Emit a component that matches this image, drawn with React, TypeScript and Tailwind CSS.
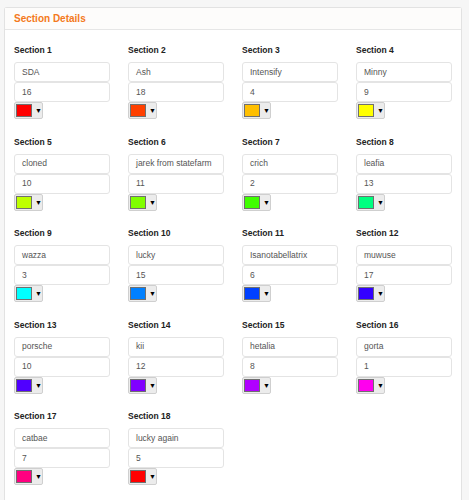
import React from "react";

const sections: { name: string; num: string; color: string }[] = [
  { name: "SDA", num: "16", color: "#ff0000" },
  { name: "Ash", num: "18", color: "#ff4000" },
  { name: "Intensify", num: "4", color: "#ffbf00" },
  { name: "Minny", num: "9", color: "#ffff00" },
  { name: "cloned", num: "10", color: "#bfff00" },
  { name: "jarek from statefarm", num: "11", color: "#80ff00" },
  { name: "crich", num: "2", color: "#40ff00" },
  { name: "leafia", num: "13", color: "#00ff80" },
  { name: "wazza", num: "3", color: "#00ffff" },
  { name: "lucky", num: "15", color: "#0080ff" },
  { name: "Isanotabellatrix", num: "6", color: "#0040ff" },
  { name: "muwuse", num: "17", color: "#3300ff" },
  { name: "porsche", num: "10", color: "#5000ff" },
  { name: "kii", num: "12", color: "#8000ff" },
  { name: "hetalia", num: "8", color: "#b000ff" },
  { name: "gorta", num: "1", color: "#ff00ee" },
  { name: "catbae", num: "7", color: "#ff0080" },
  { name: "lucky again", num: "5", color: "#ff0000" },
];

function Picker({ color }: { color: string }) {
  return (
    <div className="flex h-[17px] w-[29px] items-center rounded-[2px] border border-[#cfcfcf] bg-[#ececec] pl-[1px]">
      <div
        className="h-[13px] w-[16px] border border-[#6f6f6f]"
        style={{ backgroundColor: color }}
      />
      <span className="ml-[3px] text-[7px] leading-none text-black">▼</span>
    </div>
  );
}

export default function App() {
  return (
    <div
      className="min-h-screen bg-[#f6f6f6] pl-[4px] pr-[7px] pt-[7px]"
      style={{ fontFamily: '"Liberation Sans", Arial, sans-serif' }}
    >
      <div className="min-h-[493px] rounded-t-[3px] border border-b-0 border-[#e2e2e2] bg-white">
        <div className="flex h-[22px] items-center border-b border-[#e6e6e6] bg-[#fdfcfb] px-[9px] text-[10px] font-bold text-[#f47920]">
          Section Details
        </div>
        <div className="grid grid-cols-[repeat(4,96px)] gap-x-[18px] gap-y-[14.5px] px-[9px] pt-[12px]">
          {sections.map((s, i) => (
            <div key={i} className="flex flex-col">
              <div className="mb-[4px] h-[16px] text-[8.5px] font-bold leading-[16px] text-[#222]">
                Section {i + 1}
              </div>
              <div className="flex h-[20px] items-center rounded-[3px] border border-[#e4e4e4] px-[7px] text-[8.5px] text-[#555]">
                {s.name}
              </div>
              <div className="flex h-[20px] items-center rounded-[3px] border border-[#e4e4e4] px-[7px] text-[8.5px] text-[#555]">
                {s.num}
              </div>
              <Picker color={s.color} />
            </div>
          ))}
        </div>
      </div>
    </div>
  );
}
